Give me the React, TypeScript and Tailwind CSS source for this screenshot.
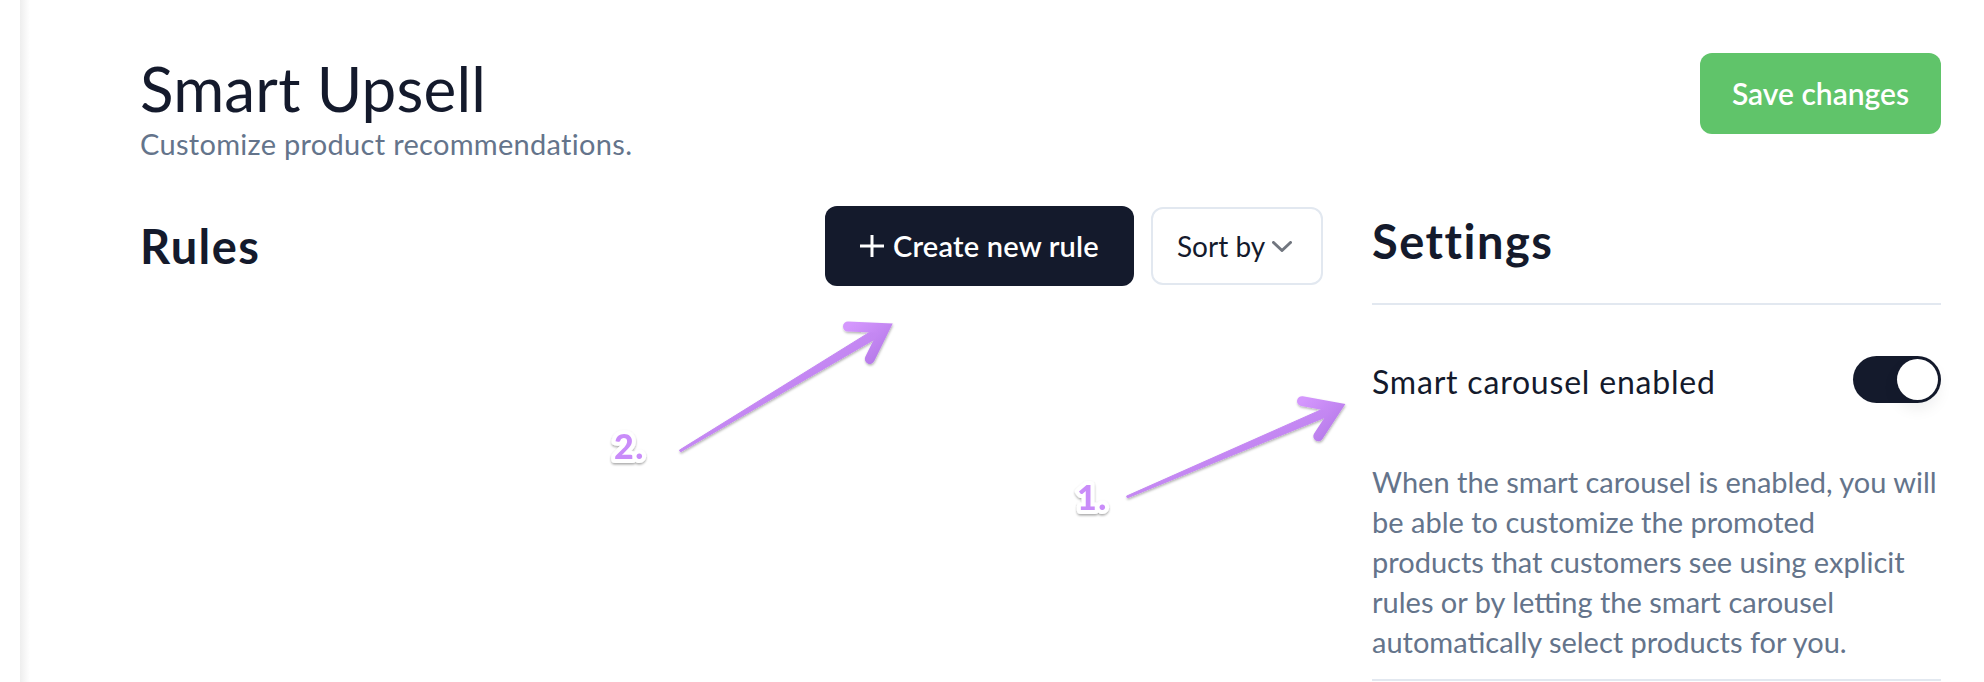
import type { ReactNode } from 'react'

const DESCRIPTION = [
  'When the smart carousel is enabled, you will',
  'be able to customize the promoted',
  'products that customers see using explicit',
  'rules or by letting the smart carousel',
  'automatically select products for you.',
]

function Toggle({ on }: { on: boolean }) {
  return (
    <button
      role="switch"
      aria-checked={on}
      className={`flex h-[47px] w-[88px] items-center rounded-full p-[3px] ${
        on ? 'justify-end bg-[#141a2c]' : 'justify-start bg-[#e2e8f0]'
      }`}
    >
      <span className="block h-[41px] w-[41px] rounded-full bg-white shadow-[0_8px_16px_rgba(15,23,42,0.08)]" />
    </button>
  )
}

function Callout({ label, x, y, children }: { label: string; x: number; y: number; children: ReactNode }) {
  return (
    <g>
      {children}
      <text
        x={x}
        y={y}
        fontFamily="Lato, sans-serif"
        fontWeight={900}
        fontSize={34}
        letterSpacing={1.5}
        fill="#c98cf9"
        stroke="#ffffff"
        strokeWidth={8}
        strokeLinejoin="round"
        paintOrder="stroke"
        filter="url(#label-shadow)"
      >
        {label}
      </text>
    </g>
  )
}

export default function App() {
  return (
    <div className="relative flex h-[682px] w-full overflow-hidden bg-white font-['Lato',sans-serif] text-[#141a2c]">
      {/* sidebar edge */}
      <div className="w-[20px] shrink-0 bg-white" />
      <div className="w-[10px] shrink-0 bg-gradient-to-r from-[#eeeeee] to-white" />

      <main className="flex-1 pl-[110px] pr-[43px]">
        <header className="flex items-start justify-between pt-[53px]">
          <div>
            <h1 className="mt-[4px] text-[62px] font-normal leading-[62px] tracking-[0.2px]">Smart Upsell</h1>
            <p className="mt-[11px] text-[29px] leading-[28px] tracking-[0.3px] text-[#64748b]">
              Customize product recommendations.
            </p>
          </div>
          <button className="h-[81px] w-[241px] rounded-[12px] bg-[#60c46a] text-[30px] font-semibold text-white">
            Save changes
          </button>
        </header>

        <div className="mt-[48px] flex gap-[49px]">
          {/* rules column */}
          <section className="flex h-[80px] flex-1 items-center justify-between">
            <h2 className="text-[47px] font-bold leading-[46px] tracking-[1.4px]">Rules</h2>
            <div className="flex items-center gap-[17px]">
              <button className="flex h-[80px] w-[309px] items-center justify-center gap-[9px] rounded-[12px] bg-[#141a2c] text-[29px] font-semibold tracking-[0.2px] text-white">
                <svg width="24" height="24" viewBox="0 0 24 24" fill="none" stroke="currentColor" strokeWidth="3">
                  <line x1="12" y1="1" x2="12" y2="23" />
                  <line x1="0" y1="12" x2="24" y2="12" />
                </svg>
                Create new rule
              </button>
              <button className="flex h-[78px] w-[172px] items-center gap-[7px] rounded-[12px] border-2 border-[#e2e8f0] bg-white pl-[24px] text-[28px] text-[#141a2c]">
                Sort by
                <svg width="20" height="11" viewBox="0 0 20 11" fill="none" stroke="#71767f" strokeWidth="3" strokeLinecap="round" strokeLinejoin="round">
                  <polyline points="1.5,1.5 10,9.5 18.5,1.5" />
                </svg>
              </button>
            </div>
          </section>

          {/* settings column */}
          <aside className="w-[569px]">
            <h2 className="pt-[12px] text-[47px] font-bold leading-[46px] tracking-[1.5px]">Settings</h2>
            <div className="mt-[39px] h-[2px] bg-[#e2e8f0]" />
            <div className="mt-[51px] flex items-center justify-between">
              <span className="mt-[4px] text-[32px] leading-[32px] tracking-[0.8px]">Smart carousel enabled</span>
              <Toggle on />
            </div>
            <p className="mt-[59px] text-[29px] leading-[40px] text-[#64748b]">
              {DESCRIPTION.map(line => (
                <span key={line} className="block whitespace-nowrap">
                  {line}
                </span>
              ))}
            </p>
            <div className="mt-[17px] h-[2px] bg-[#e2e8f0]" />
          </aside>
        </div>
      </main>

      {/* numbered callouts */}
      <svg className="pointer-events-none absolute inset-0" width="1984" height="682" viewBox="0 0 1984 682">
        <defs>
          <linearGradient id="arrow-fill" x1="0" y1="0" x2="1" y2="1">
            <stop offset="0" stopColor="#d497fd" />
            <stop offset="1" stopColor="#b478e8" />
          </linearGradient>
          <filter id="arrow-shadow" x="-10%" y="-10%" width="120%" height="130%">
            <feDropShadow dx="0.5" dy="1.5" stdDeviation="1" floodColor="#000000" floodOpacity="0.3" />
          </filter>
          <filter id="label-shadow" x="-20%" y="-20%" width="140%" height="150%">
            <feDropShadow dx="0" dy="1.5" stdDeviation="1" floodColor="#000000" floodOpacity="0.35" />
          </filter>
        </defs>

        <Callout label="2." x={614} y={459}>
          <g filter="url(#arrow-shadow)" fill="url(#arrow-fill)" stroke="url(#arrow-fill)">
            <polygon points="680.5,451.9 679.5,450.1 882.6,324.2 887.2,332.0" strokeWidth="1" strokeLinejoin="round" />
            <polyline points="848,326.5 884.9,328.1 869.8,358.9" fill="none" strokeWidth="10" strokeLinecap="round" strokeLinejoin="miter" />
          </g>
        </Callout>

        <Callout label="1." x={1077} y={510}>
          <g filter="url(#arrow-shadow)" fill="url(#arrow-fill)" stroke="url(#arrow-fill)">
            <polygon points="1127.4,497.9 1126.6,496.1 1335.3,403.5 1338.9,411.7" strokeWidth="1" strokeLinejoin="round" />
            <polyline points="1302,401.2 1337.1,407.6 1318.3,436.3" fill="none" strokeWidth="10" strokeLinecap="round" strokeLinejoin="miter" />
          </g>
        </Callout>
      </svg>
    </div>
  )
}
